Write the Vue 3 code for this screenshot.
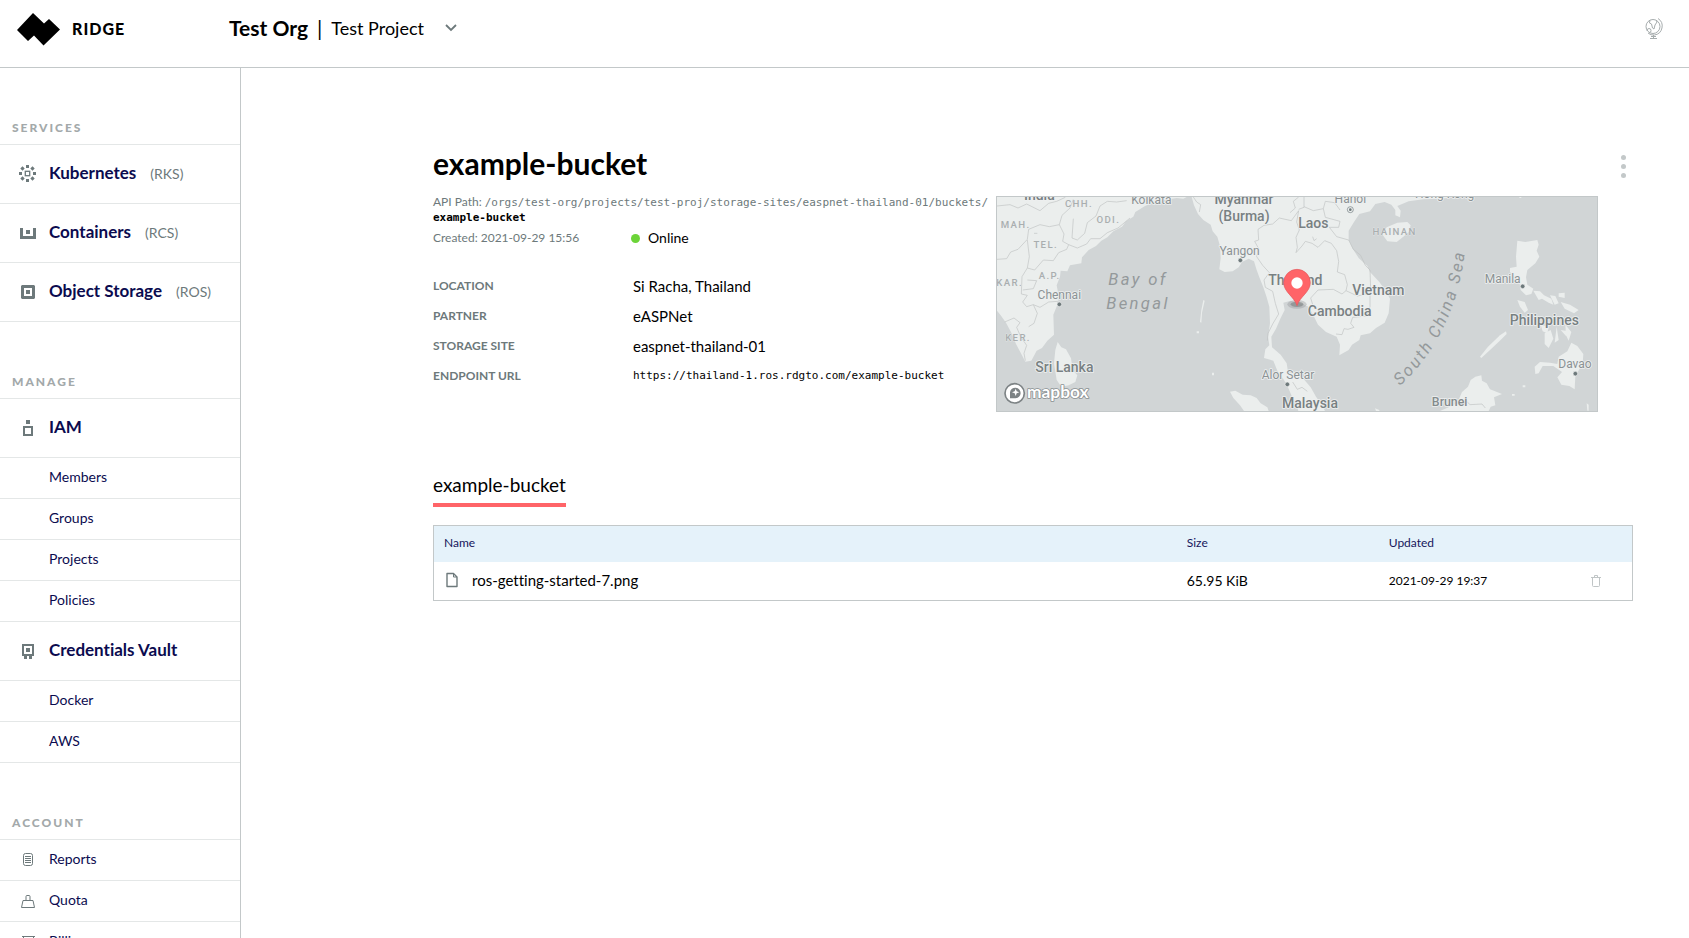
<script setup>
import { ref } from 'vue'

const services = [
  { label: 'Kubernetes', note: '(RKS)', icon: 'kubernetes' },
  { label: 'Containers', note: '(RCS)', icon: 'containers' },
  { label: 'Object Storage', note: '(ROS)', icon: 'storage' },
]

const manage = [
  { label: 'IAM', icon: 'iam', children: ['Members', 'Groups', 'Projects', 'Policies'] },
  { label: 'Credentials Vault', icon: 'vault', children: ['Docker', 'AWS'] },
]

const account = [
  { label: 'Reports', icon: 'reports' },
  { label: 'Quota', icon: 'quota' },
  { label: 'Billing', icon: 'billing' },
]

const facts = [
  { term: 'Location', value: 'Si Racha, Thailand' },
  { term: 'Partner', value: 'eASPNet' },
  { term: 'Storage Site', value: 'easpnet-thailand-01' },
  { term: 'Endpoint URL', value: 'https://thailand-1.ros.rdgto.com/example-bucket', mono: true },
]

const files = ref([{ name: 'ros-getting-started-7.png', size: '65.95 KiB', updated: '2021-09-29 19:37' }])

const icons = {
  kubernetes:
    '<g fill="#6d797b"><path d="M8 1h3v3H8zM8 15h3v3H8zM1 8h3v3H1zM15 8h3v3h-3z"/><path d="M4.500 2.300l2.200 2.200-2.200 2.200-2.200-2.200zM14.500 2.300l2.200 2.200-2.200 2.200-2.200-2.200zM4.500 12.300l2.200 2.200-2.200 2.200-2.200-2.200zM14.500 12.300l2.200 2.200-2.200 2.200-2.200-2.200z"/></g><rect x="7.300" y="7.300" width="4.400" height="4.400" fill="none" stroke="#6d797b" stroke-width="1.300"/>',
  containers: '<path fill="#6d797b" d="M2 5h3v8h10V5h3v11H2zM8 7h4v4H8z"/>',
  storage: '<path fill="#6d797b" fill-rule="evenodd" d="M4 3h12l1 1v12l-1 1H4l-1-1V4zM6 6v8h8V6zM8 8h4v4H8z"/>',
  iam: '<path fill="#6d797b" fill-rule="evenodd" d="M8 2h4v4H8zM5 8h10v10H5zM7 10v6h6v-6z"/>',
  vault:
    '<path fill="#6d797b" fill-rule="evenodd" d="M4 3h12v12h-2v3h-3v-3H9v3H6v-3H4zM6 5v8h8V5zM8 7h4v4H8z"/>',
  reports:
    '<rect x="5.500" y="3.500" width="9" height="12" rx="2" fill="none" stroke="#6d797b"/><path d="M7 6.500h6M7 8.500h6M7 10.500h6M7 12.500h6" stroke="#6d797b"/>',
  quota:
    '<path d="M5 9.500h10l1.500 7h-13zM8 9V5.500a1 1 0 0 1 1-1h2a1 1 0 0 1 1 1V9" fill="none" stroke="#6d797b" stroke-linejoin="round"/>',
  billing: '<path d="M4 4.500h13M5.500 4.500v12h10v-12M8 8.500h5M10.500 6.500v6" fill="none" stroke="#6d797b"/>',
}

const land = [
  'M21 21H590L580 26L560 24L500 34L465 48L436 66L430 80L408 94L396 110L370 124L352 142L334 152L318 168L296 180L276 202L274 220L240 226L232 244L212 242L210 260L200 286L206 318L204 340L190 374L192 434L172 452L156 474L140 482L124 512L106 515L92 488L78 462L66 432L48 398L32 376L21 362Z',
  'M203 456L214 472L228 478L243 505L248 540L262 556L256 576L236 586L214 590L200 570L192 520L196 480Z',
  'M605 21L612 46L624 72L640 90L662 104L668 124L682 140L690 168L692 204L688 238L704 246L728 244L746 232L756 216L776 206L792 214L800 240L808 262L820 292L830 322L838 350L840 400L834 440L838 466L826 478L822 504L850 512L862 542L882 570L896 596L906 620L918 640L925 663H1005L992 640L978 620L962 592L940 566L912 552L894 545L890 520L872 494L846 472L844 440L858 416L872 384L884 360L880 338L902 332L930 340L956 350L970 376L984 404L1008 426L1040 440L1050 464L1048 496L1076 480L1086 464L1108 450L1112 436L1140 430L1158 414L1184 398L1196 370L1200 326L1184 298L1168 276L1140 246L1132 228L1106 204L1088 176L1076 150L1076 122L1092 96L1108 72L1140 64L1156 42L1184 36L1204 44L1216 60L1216 76L1230 82L1232 62L1222 48L1256 34L1300 28L1350 26L1400 21Z',
  'M1176 132L1190 112L1222 98L1252 96L1262 106L1256 126L1240 140L1220 156L1192 154Z',
  'M720 605L736 602L758 614L782 616L800 624L812 640L832 652L836 663H762L750 646L730 624Z',
  'M1350 663L1376 652L1402 638L1416 606L1434 590L1442 570L1456 560L1474 556L1476 572L1490 580L1500 598L1536 612L1512 622L1516 646L1502 650L1496 663Z',
  'M1582 152L1606 156L1642 150L1646 164L1640 182L1648 200L1636 220L1612 240L1608 262L1612 284L1630 296L1624 312L1608 316L1592 300L1588 276L1570 256L1560 246L1560 234L1580 230L1578 200Z',
  'M1630 302L1650 304L1662 316L1684 326L1690 344L1676 338L1656 326L1646 330Z',
  'M1582 330L1604 336L1614 360L1604 368L1590 350Z',
  'M1470 500L1494 470L1530 436L1548 424L1550 432L1528 454L1500 480L1474 504Z',
  'M1636 552L1634 530L1650 516L1680 518L1702 522L1706 500L1732 484L1744 458L1762 468L1780 492L1778 520L1768 538L1756 558L1754 598L1738 588L1714 584L1702 562L1716 546L1690 528L1658 528L1646 550Z',
  'M1706 310L1724 308L1724 324L1706 320ZM1680 316L1696 318L1706 340L1694 344ZM1712 336L1740 344L1766 360L1752 370L1724 356Z',
  'M1652 404L1676 410L1672 430L1658 424ZM1664 430L1682 420L1690 446L1676 474L1664 462ZM1700 410L1706 450L1694 458ZM1712 420L1736 424L1728 438ZM1726 404L1744 426L1736 452L1728 436Z',
  'M640 330L644 332L636 368L634 398L630 396L634 360ZM620 424H627V430H620ZM666 548H672V556H666ZM1155 655L1168 660V663H1158Z',
  'M1598 586H1606V592H1598ZM1566 612H1574V617H1566ZM1790 640L1796 644V662H1792ZM1588 20H1594V24H1588Z',
]

const borders = [
  'M21 48L60 44L84 54L110 42L150 62L176 40L200 34L226 22',
  'M21 208L50 206L62 186L84 178L112 148L116 118L150 104L178 110L208 104L216 76L240 54L250 28',
  'M112 150L118 200L112 234L134 240L160 210L190 212L206 188L230 178L236 164L262 174L290 162L302 146L330 146L352 128L384 114L420 84',
  'M208 104L222 132L218 154L236 164M250 86L246 144L262 150L284 130L292 98L318 78L330 48L352 34L380 36L410 32',
  'M112 234L96 260L94 312L112 316L98 336L110 350L130 344L150 352L176 336L204 334',
  'M44 396L72 384L90 398L80 412L92 440L110 466L102 490L106 512',
  'M130 344L142 370L132 400L116 410M112 270L140 272L130 296L98 300',
  'M926 62L904 92L868 84L848 102L822 106L804 118L806 150L794 154L806 176L800 200L818 226L838 248L822 270L826 292L848 304L856 340L866 372L848 402L834 430L832 452',
  'M900 68L916 54L910 34L926 21M942 21L942 52L926 58',
  'M926 62L920 96L928 120L918 142L922 172L918 188L936 168L946 154L966 160L984 172L1004 152L1024 160L1040 182L1046 214L1042 246L1064 254L1072 284L1068 302L1056 312L1030 298L984 300L962 324L970 350',
  'M942 50L970 62L1000 56L1006 82L1050 94L1046 112L1018 112L1040 140L1076 150L1090 178L1112 196L1126 226L1140 240L1142 300M1000 56L1006 34L1034 38L1050 60',
  'M1068 302L1102 318L1140 310L1140 350L1130 378L1088 382L1082 400L1092 412L1074 418L1062 416L1056 434L1038 432',
  'M908 576L922 598L936 592L952 604M1420 644L1430 634L1440 644L1476 642L1486 654',
  'M610 21L620 36L632 44L628 66M968 140L972 152L980 146M132 130H142',
]

const places = [
  { text: 'India', x: 148, y: 30, kind: 'country' },
  { text: 'CHH.', x: 267, y: 51, kind: 'state' },
  { text: 'ODI.', x: 355, y: 98, kind: 'state' },
  { text: 'MAH.', x: 77, y: 115, kind: 'state' },
  { text: 'TEL.', x: 167, y: 174, kind: 'state' },
  { text: 'A.P.', x: 179, y: 268, kind: 'state' },
  { text: 'KAR.', x: 59, y: 287, kind: 'state' },
  { text: 'KER.', x: 84, y: 453, kind: 'state' },
  { text: 'HAINAN', x: 1214, y: 135, kind: 'state' },
  { text: 'Kolkata', x: 484, y: 43, kind: 'city' },
  { text: 'Chennai', x: 208, y: 326, kind: 'city' },
  { text: 'Yangon', x: 749, y: 195, kind: 'city' },
  { text: 'Hanoi', x: 1081, y: 39, kind: 'city' },
  { text: 'Hong Kong', x: 1364, y: 25, kind: 'city' },
  { text: 'Manila', x: 1538, y: 280, kind: 'city' },
  { text: 'Davao', x: 1755, y: 534, kind: 'city' },
  { text: 'Alor Setar', x: 894, y: 566, kind: 'city' },
  { text: 'Brunei', x: 1379, y: 648, kind: 'town' },
  { text: 'Myanmar', x: 762, y: 43, kind: 'country' },
  { text: '(Burma)', x: 762, y: 92, kind: 'country' },
  { text: 'Laos', x: 970, y: 114, kind: 'country' },
  { text: 'Thailand', x: 916, y: 285, kind: 'country' },
  { text: 'Vietnam', x: 1165, y: 314, kind: 'country' },
  { text: 'Cambodia', x: 1049, y: 379, kind: 'country' },
  { text: 'Philippines', x: 1663, y: 404, kind: 'country' },
  { text: 'Sri Lanka', x: 223, y: 546, kind: 'country' },
  { text: 'Malaysia', x: 960, y: 654, kind: 'country' },
  { text: 'Bay of', x: 444, y: 286, kind: 'sea' },
  { text: 'Bengal', x: 444, y: 356, kind: 'sea' },
]

const dots = [
  [208, 343],
  [751, 211],
  [1598, 289],
  [1756, 551],
  [892, 583],
]
</script>

<template>
  <div class="page">
    <header class="topbar">
      <a class="brand" href="#">
        <svg width="44" height="34" viewBox="0 0 44 34" aria-hidden="true">
          <path d="M17 1l11 10.500 5-4.500 11 10.500-16.500 16-9.500-10-6 5.500L1 18z" />
        </svg>
        <span class="brand-name">RIDGE</span>
      </a>
      <button class="switcher" type="button">
        <strong>Test Org</strong>
        <span class="bar">|</span>
        <span class="project">Test Project</span>
        <svg width="12" height="8" viewBox="0 0 12 8" aria-hidden="true">
          <path d="M1 1l5 5 5-5" fill="none" stroke="#6d797b" stroke-width="1.800" />
        </svg>
      </button>
      <button class="globe" type="button" aria-label="Region">
        <svg width="18" height="22" viewBox="0 0 18 22" fill="none" stroke="#a6acad" aria-hidden="true">
          <circle cx="8" cy="8.500" r="7" />
          <path d="M13 .500a9 9 0 0 1-3.500 16.500q-4 .500-6.500-2M5 2l-.500 3 2 1 1 4 1.500 1 1-4 2-3-1-2M2 13q0-2.500 2-2.500t2 2-1.500 2.500M8.500 17v3M5 20.500h7M6 18.500h5" />
        </svg>
      </button>
    </header>

    <div class="body">
      <nav class="sidebar">
        <h2>SERVICES</h2>
        <a v-for="s in services" :key="s.label" class="item major" href="#">
          <svg width="20" height="20" viewBox="0 0 20 20" aria-hidden="true" v-html="icons[s.icon]" />
          <span>{{ s.label }}</span>
          <small>{{ s.note }}</small>
        </a>

        <h2>MANAGE</h2>
        <template v-for="m in manage" :key="m.label">
          <a class="item major" href="#">
            <svg width="20" height="20" viewBox="0 0 20 20" aria-hidden="true" v-html="icons[m.icon]" />
            <span>{{ m.label }}</span>
          </a>
          <a v-for="c in m.children" :key="c" class="item child" href="#"><span>{{ c }}</span></a>
        </template>

        <h2>ACCOUNT</h2>
        <a v-for="a in account" :key="a.label" class="item" href="#">
          <svg width="20" height="20" viewBox="0 0 20 20" aria-hidden="true" v-html="icons[a.icon]" />
          <span>{{ a.label }}</span>
        </a>
      </nav>

      <main>
        <div class="title-row">
          <h1>example-bucket</h1>
          <button class="more" type="button" aria-label="More actions"><i /><i /><i /></button>
        </div>

        <section class="overview">
          <div class="details">
            <p class="path">
              API Path:
              <code>/orgs/test-org/projects/test-proj/storage-sites/easpnet-thailand-01/buckets/<wbr /><b>example-bucket</b></code>
            </p>
            <div class="status-row">
              <span class="created">Created: 2021-09-29 15:56</span>
              <span class="status">Online</span>
            </div>
            <dl>
              <template v-for="f in facts" :key="f.term">
                <dt>{{ f.term }}</dt>
                <dd :class="{ mono: f.mono }">{{ f.value }}</dd>
              </template>
            </dl>
          </div>

          <svg class="map" viewBox="21 21 1800 642" preserveAspectRatio="xMidYMid slice" role="img" aria-label="Map of Southeast Asia">
            <path v-for="d in land" :key="d" class="land" :d="d" />
            <path v-for="d in borders" :key="d" class="border" :d="d" />
            <text v-for="p in places" :key="p.text" :x="p.x" :y="p.y" :class="p.kind">{{ p.text }}</text>
            <path id="china-sea" d="M1230 588Q1412 420 1430 130" fill="none" />
            <text class="sea curved"><textPath href="#china-sea">South China Sea</textPath></text>
            <circle v-for="d in dots" :key="d[0]" class="dot" :cx="d[0]" :cy="d[1]" r="7" />
            <circle cx="1081" cy="59" r="9" class="ring" />
            <circle cx="1081" cy="59" r="4" fill="#6d797b" />

            <ellipse cx="921" cy="343" rx="29" ry="13" fill="#8b9091" opacity=".35" />
            <ellipse cx="921" cy="343" rx="19" ry="8" fill="#6d7374" opacity=".5" />
            <path d="M921 347C913 320 881 306 881 278a40 40 0 0 1 80 0C961 306 929 320 921 347Z" fill="#ff6468" stroke="#e2595d" stroke-width="2" />
            <circle cx="921" cy="279" r="17" fill="#fff" />

            <circle cx="74" cy="610" r="29" fill="#fff" stroke="#7d8385" stroke-width="5" />
            <path d="M60 625V607a16 16 0 1 1 16 18Z" fill="#7d8385" />
            <path d="M77 596l3 8 8 3-8 3-3 8-3-8-8-3 8-3z" fill="#fff" />
            <text x="111" y="624" class="mapbox">mapbox</text>
          </svg>
        </section>

        <button class="tab" type="button">example-bucket</button>

        <table>
          <thead>
            <tr>
              <th class="name">Name</th>
              <th class="size">Size</th>
              <th class="updated">Updated</th>
              <th class="actions"></th>
            </tr>
          </thead>
          <tbody>
            <tr v-for="f in files" :key="f.name">
              <td>
                <a class="file" href="#">
                  <svg width="12" height="16" viewBox="0 0 12 16" fill="none" stroke="#6d797b" aria-hidden="true">
                    <path d="M1 1.500h6.500l3.500 3.500v9.500H1z" stroke-width="1.400" stroke-linejoin="round" />
                    <path d="M7.500 1.500v3.500H11" />
                  </svg>
                  <span>{{ f.name }}</span>
                </a>
              </td>
              <td><span>{{ f.size }}</span></td>
              <td class="date"><span>{{ f.updated }}</span></td>
              <td>
                <button class="trash" type="button" aria-label="Delete file">
                  <svg width="10" height="12" viewBox="0 0 10 12" fill="none" stroke="#c0c5c6" aria-hidden="true">
                    <path d="M0 2.500h10M3.500 2V.500h3V2M1.500 3v7.500q0 1 1 1h5q1 0 1-1V3" />
                  </svg>
                </button>
              </td>
            </tr>
          </tbody>
        </table>
      </main>
    </div>
  </div>
</template>

<style>
body {
  margin: 0;
  background: #fff;
}
</style>

<style scoped>
.page {
  display: flex;
  flex-direction: column;
  height: 100vh;
  overflow: hidden;
  font-family: Lato, sans-serif;
  font-size: 14px;
  font-variant-ligatures: none;
  color: #000;
}
button {
  border: 0;
  padding: 0;
  background: none;
  font: inherit;
  color: inherit;
  cursor: pointer;
}
a {
  color: inherit;
  text-decoration: none;
}
svg {
  flex: none;
}
.topbar {
  display: flex;
  align-items: center;
  flex: none;
  box-sizing: border-box;
  height: 68px;
  padding: 0 26px 10px 16px;
  border-bottom: 1px solid #c3c8c9;
}
.brand {
  display: flex;
  align-items: center;
  gap: 12px;
  width: 213px;
}
.brand-name {
  font-size: 16px;
  font-weight: 900;
  letter-spacing: 1px;
}
.switcher {
  display: flex;
  align-items: center;
  padding-bottom: 2px;
  font-size: 18px;
}
.switcher strong,
.bar {
  font-size: 21px;
}
.bar {
  margin: 0 9px;
}
.project {
  margin-right: 21px;
}
.globe {
  display: flex;
  margin-left: auto;
}
.body {
  display: flex;
  flex: 1;
  min-height: 0;
}
.sidebar {
  flex: none;
  width: 240px;
  overflow-y: auto;
  scrollbar-width: none;
  border-right: 1px solid #c3c8c9;
  color: #0b0b4f;
}
.sidebar h2 {
  box-sizing: border-box;
  height: 77px;
  margin: 0;
  padding: 52px 0 0 12px;
  border-bottom: 1px solid #e4e7e7;
  font-size: 12px;
  line-height: 16px;
  font-weight: 900;
  letter-spacing: 2px;
  color: #a3a9aa;
}
.item {
  display: flex;
  align-items: center;
  gap: 11px;
  box-sizing: border-box;
  height: 41px;
  padding-left: 18px;
  border-bottom: 1px solid #e4e7e7;
  font-size: 14px;
}
.item span,
.item small {
  padding-bottom: 4px;
}
.item.major {
  height: 59px;
  font-size: 17px;
  font-weight: 700;
}
.item.child {
  padding-left: 49px;
}
.item small {
  margin-left: 3px;
  padding-bottom: 2px;
  font-size: 14px;
  font-weight: 400;
  color: #6d797b;
}
main {
  flex: 1;
  min-width: 0;
  padding: 75px 56px 0 192px;
}
.title-row {
  display: flex;
  justify-content: space-between;
  align-items: center;
}
h1 {
  margin: 0;
  font-size: 30px;
  line-height: 40px;
}
.more {
  display: grid;
  gap: 4px;
  padding: 7px 7px 0;
}
.more i {
  width: 5px;
  height: 5px;
  border-radius: 50%;
  background: #c3c8c9;
}
.overview {
  display: flex;
  justify-content: space-between;
  padding: 13px 35px 0 0;
}
.details {
  flex: none;
  margin-top: -1px;
}
.path {
  max-width: 560px;
  margin: 0;
  font-size: 12px;
  line-height: 14px;
  color: #6d797b;
}
code,
.mono {
  font-family: "DejaVu Sans Mono", monospace;
  font-size: 11px;
}
.path b {
  color: #000;
}
.status-row {
  display: flex;
  align-items: center;
  margin-top: 3px;
  line-height: 20px;
}
.created {
  width: 198px;
  font-size: 12px;
  color: #6d797b;
}
.status {
  display: flex;
  align-items: center;
  gap: 8px;
}
.status::before {
  content: "";
  width: 9px;
  height: 9px;
  border-radius: 50%;
  background: #6cd438;
}
dl {
  display: grid;
  grid-template-columns: 200px 1fr;
  row-gap: 10px;
  margin: 28px 0 0;
  line-height: 20px;
}
dt {
  font-size: 12px;
  font-weight: 700;
  text-transform: uppercase;
  color: #6d797b;
}
dd {
  margin: 0;
  font-size: 15px;
}
dd.mono {
  font-size: 11px;
}
.map {
  box-sizing: border-box;
  width: 602px;
  max-width: 52%;
  height: 216px;
  border: 1px solid #c3c8c9;
  background: #d1d5d6;
  font-family: Roboto, sans-serif;
  text-anchor: middle;
}
.land {
  fill: #ebeeed;
}
.border {
  fill: none;
  stroke: #bfc3c3;
  stroke-width: 2;
}
.map text {
  paint-order: stroke;
  stroke: #eef0f0;
  stroke-width: 5px;
  stroke-linejoin: round;
}
.map .country {
  font-size: 42px;
  font-weight: 500;
  fill: #788082;
}
.map .town {
  font-size: 37px;
  font-weight: 500;
  fill: #848b8d;
}
.map .city {
  font-size: 36px;
  fill: #8b9294;
}
.map .state {
  font-size: 29px;
  font-weight: 500;
  letter-spacing: 4px;
  stroke-width: 2px;
  fill: #a9aeaf;
}
.map .sea {
  font-size: 50px;
  font-style: italic;
  letter-spacing: 7px;
  fill: #94999b;
  stroke: none;
}
.map .curved {
  text-anchor: start;
}
.map .mapbox {
  font-family: Lato, sans-serif;
  font-size: 52px;
  font-weight: 700;
  text-anchor: start;
  fill: #fff;
  stroke: #8a9092;
}
.dot {
  fill: #6d797b;
  stroke: #eef0f0;
  stroke-width: 2;
}
.ring {
  fill: #eef0f0;
  stroke: #6d797b;
  stroke-width: 2;
}
.tab {
  display: block;
  margin-top: 60px;
  padding-bottom: 5px;
  border-bottom: 4px solid #ff6468;
  font-size: 19px;
  line-height: 26px;
}
table {
  width: 100%;
  margin-top: 18px;
  border: 1px solid #c3c8c9;
  border-collapse: separate;
  border-spacing: 0;
  table-layout: fixed;
}
th,
td {
  box-sizing: border-box;
  height: 38px;
  padding: 0 10px 2px;
  text-align: left;
}
th {
  height: 36px;
  padding-bottom: 3px;
  background: #e5f2fa;
  font-size: 12px;
  font-weight: 400;
  color: #16165c;
}
.name {
  width: 62%;
}
.size {
  width: 202px;
}
.actions {
  width: 51px;
}
.date {
  font-size: 12px;
}
.file {
  display: flex;
  align-items: center;
  gap: 14px;
  padding-left: 2px;
  font-size: 15px;
}
.trash {
  display: flex;
  padding-top: 2px;
}
</style>
